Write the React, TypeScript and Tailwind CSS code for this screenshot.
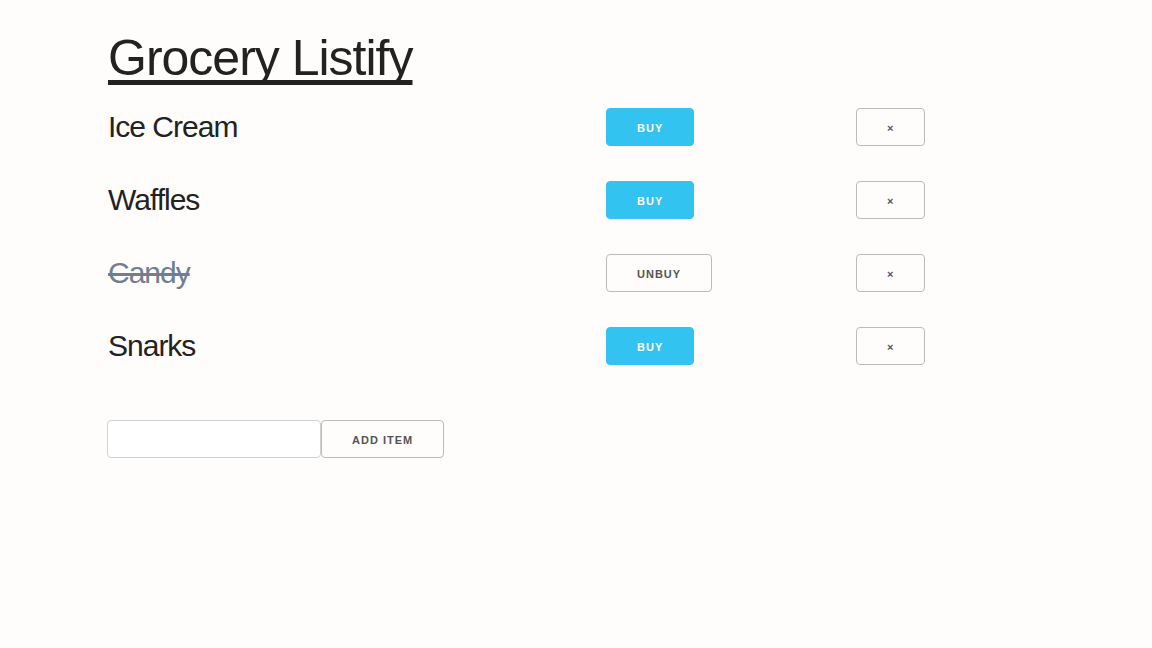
import React, { useState } from 'react';

interface Item {
  id: number;
  name: string;
  bought: boolean;
}

const initialItems: Item[] = [
  { id: 1, name: 'Ice Cream', bought: false },
  { id: 2, name: 'Waffles', bought: false },
  { id: 3, name: 'Candy', bought: true },
  { id: 4, name: 'Snarks', bought: false },
];

const btnBase =
  'h-[38px] px-[30px] rounded-[4px] border text-[11px] font-bold uppercase tracking-[1px] leading-[38px] whitespace-nowrap';

const App: React.FC = () => {
  const [items, setItems] = useState<Item[]>(initialItems);
  const [text, setText] = useState('');

  const toggle = (id: number) =>
    setItems(items.map((i) => (i.id === id ? { ...i, bought: !i.bought } : i)));

  const remove = (id: number) => setItems(items.filter((i) => i.id !== id));

  const add = () => {
    if (!text.trim()) return;
    setItems([...items, { id: Date.now(), name: text.trim(), bought: false }]);
    setText('');
  };

  return (
    <div className="min-h-screen bg-[#fffdfc] text-[#222] font-['Liberation_Sans',Arial,sans-serif]">
      <div className="pl-[108px] pt-[28px]">
        <h1 className="text-[50px] leading-[60px] tracking-[-1px] underline [text-decoration-skip-ink:none] underline-offset-[5px]">
          Grocery Listify
        </h1>

        {/* List */}
        <div className="mt-[20px] flex flex-col gap-[35px]">
          {items.map((item) => (
            <div key={item.id} className="flex items-center h-[38px]">
              <div
                className={`w-[498px] text-[30px] tracking-[-1px] leading-[38px] ${
                  item.bought ? 'line-through text-[#708090]' : ''
                }`}
              >
                {item.name}
              </div>
              <div className="w-[250px]">
                {item.bought ? (
                  <button
                    onClick={() => toggle(item.id)}
                    className={`${btnBase} border-[#bbb] bg-transparent text-[#555]`}
                  >
                    Unbuy
                  </button>
                ) : (
                  <button
                    onClick={() => toggle(item.id)}
                    className={`${btnBase} border-[#33c3f0] bg-[#33c3f0] text-white`}
                  >
                    Buy
                  </button>
                )}
              </div>
              <button
                onClick={() => remove(item.id)}
                className={`${btnBase} border-[#bbb] bg-transparent text-[#555]`}
              >
                ×
              </button>
            </div>
          ))}
        </div>

        {/* Add item */}
        <div className="mt-[55px] flex items-center">
          <input
            value={text}
            onChange={(e) => setText(e.target.value)}
            className="h-[38px] w-[214px] -ml-px rounded-[4px] border border-[#d1d1d1] bg-white px-[10px] text-[15px] outline-none"
          />
          <button onClick={add} className={`${btnBase} border-[#bbb] bg-transparent text-[#555]`}>
            Add item
          </button>
        </div>
      </div>
    </div>
  );
};

export default App;
